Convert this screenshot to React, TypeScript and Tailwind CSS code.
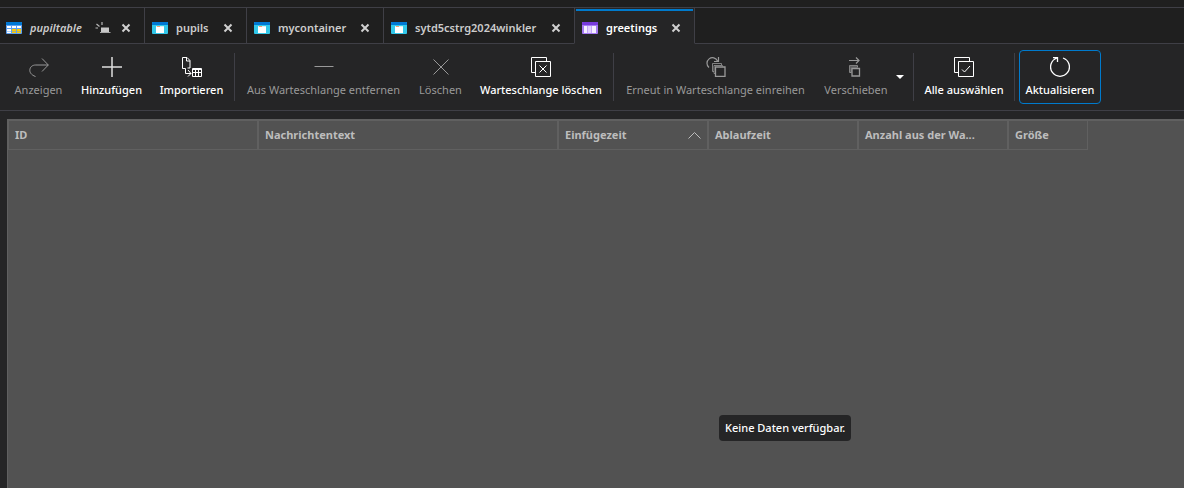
import type { ReactNode } from 'react';
import clsx from 'clsx';

function TableIcon() {
  return (
    <svg width="16" height="14" viewBox="0 0 16 14" aria-hidden="true">
      <rect x="0" y="1" width="16" height="12" rx="1" fill="#5ea0ef" />
      <path d="M0 2a1 1 0 0 1 1-1h14a1 1 0 0 1 1 1v2H0z" fill="#0078d4" />
      <g fill="#ffffff">
        <rect x="1" y="5" width="4" height="2" />
        <rect x="6" y="5" width="4" height="2" />
        <rect x="11" y="5" width="4" height="2" />
        <rect x="1" y="8" width="4" height="2" />
        <rect x="6" y="8" width="4" height="2" fill="#ffca00" />
        <rect x="11" y="8" width="4" height="2" fill="#ffca00" />
        <rect x="1" y="10.500" width="4" height="1.500" />
        <rect x="6" y="10.500" width="4" height="1.500" fill="#ffca00" />
        <rect x="11" y="10.500" width="4" height="1.500" fill="#ffca00" />
      </g>
    </svg>
  );
}

function ContainerIcon() {
  return (
    <svg width="16" height="14" viewBox="0 0 16 14" aria-hidden="true">
      <rect x="0" y="1" width="16" height="12" rx="1" fill="#32c8ea" />
      <path d="M0 2a1 1 0 0 1 1-1h14a1 1 0 0 1 1 1v2H0z" fill="#0078d4" />
      <rect x="4" y="5" width="8" height="7" fill="#ffffff" />
      <rect x="4" y="5" width="8" height="1" fill="#d8eef5" />
      <rect x="5" y="5" width="3" height="1" fill="#f2a070" />
    </svg>
  );
}

function QueueIcon() {
  return (
    <svg width="16" height="14" viewBox="0 0 16 14" aria-hidden="true">
      <rect x="0" y="1" width="16" height="12" rx="1" fill="#a67af4" />
      <path d="M0 2a1 1 0 0 1 1-1h14a1 1 0 0 1 1 1v2H0z" fill="#773adc" />
      <rect x="2" y="5" width="3" height="7" fill="#f5eeff" />
      <rect x="5.500" y="5" width="4" height="7" fill="#e2d0ff" />
      <rect x="10" y="5" width="4" height="7" fill="#f5eeff" />
    </svg>
  );
}

function PreviewIcon() {
  return (
    <svg width="16" height="12" viewBox="0 0 16 12" fill="none" aria-hidden="true">
      <path d="M1.500 2l3 2.500M7 0v3M.5 6h2.500" stroke="#b8b8b8" strokeWidth="1.200" />
      <path d="M6 5.500h8v4.500H6z" fill="#c8c8c8" />
      <path d="M5 10.500h10.500" stroke="#a8a8a8" />
    </svg>
  );
}

function CloseIcon() {
  return (
    <svg width="10" height="10" viewBox="0 0 10 10" fill="none" aria-hidden="true">
      <path d="M1.500 1.500l7 7M8.500 1.500l-7 7" stroke="#d0d0d0" strokeWidth="2" />
    </svg>
  );
}

function Glyph({ children }: { children: ReactNode }) {
  return (
    <svg width="20" height="20" viewBox="0 0 20 20" fill="none" stroke="currentColor" aria-hidden="true">
      {children}
    </svg>
  );
}

const glyphs = {
  open: (
    <Glyph>
      <path d="M6.500 19.500C2 18 .8 15 .8 13.500c0-3.500 2.500-5.500 6-5.500h12.500M13 1.500L19.300 8 13 14.500" />
    </Glyph>
  ),
  add: (
    <Glyph>
      <path d="M10 0v20M0 10h20" strokeWidth="1.500" opacity="0.85" />
    </Glyph>
  ),
  load: (
    <Glyph>
      <path d="M3.500 11.500H.5V.5h4.500l3 3v7.500H5.500M4.500.5v3.500H8" />
      <path d="M3.500 11.500v5H9M6 13l3 3.500-3 3" />
      <path d="M10.500 11.500h9v8h-9zM10 12.500h10M10 15.500h10M13.500 12v8M16.500 12v8" />
    </Glyph>
  ),
  dequeue: (
    <Glyph>
      <path d="M.5 9.500h19" />
    </Glyph>
  ),
  remove: (
    <Glyph>
      <path d="M2.500 2.500l15 15M17.500 2.500l-15 15" />
    </Glyph>
  ),
  clear: (
    <Glyph>
      <path d="M4 15.500H.5V.5h15V4M4.500 4.500h15v15h-15zM8.500 8.500l7 7M15.500 8.500l-7 7" />
    </Glyph>
  ),
  requeue: (
    <Glyph>
      <path d="M3 10.500A5.500 5.500 0 1 1 11.500 4M12.500 0v4.500H8" strokeWidth="1.200" />
      <path d="M8 14.500H6.500V6.500h9V8M9 16.500H8V8.500h8.500v1" opacity="0.8" />
      <path d="M9.500 10h9.500v9.500H9.500z" strokeWidth="1.300" />
    </Glyph>
  ),
  move: (
    <Glyph>
      <path d="M3 3.500h10M10 .5l3 3-3 3" strokeWidth="1.200" />
      <path d="M5 15.500H3.500V8.500h8V10" opacity="0.8" />
      <path d="M4 9h8v2H6v5H4z" fill="currentColor" stroke="none" opacity="0.5" />
      <path d="M6 11.500h7.500V19H6z" strokeWidth="1.300" />
    </Glyph>
  ),
  selectAll: (
    <Glyph>
      <path d="M4 15.500H.5V.5h15V4M4.500 4.500h15v15h-15zM8 12.500l2.500 2.500 5.500-6" />
    </Glyph>
  ),
  refresh: (
    <Glyph>
      <path d="M13 1A9.400 9.400 0 1 1 7 1M3 .6h4.500v4.400" strokeWidth="1.300" />
    </Glyph>
  ),
};

type TabData = { name: string; icon: ReactNode; width: string; active?: boolean; preview?: boolean };

const tabs: TabData[] = [
  { name: 'pupiltable', icon: <TableIcon />, width: 'w-36 pl-1.5', preview: true },
  { name: 'pupils', icon: <ContainerIcon />, width: 'w-[102px] border-l pl-[7px]' },
  { name: 'mycontainer', icon: <ContainerIcon />, width: 'w-[137px] border-l pl-[7px]' },
  { name: 'sytd5cstrg2024winkler', icon: <ContainerIcon />, width: 'w-[191px] border-l pl-[7px]' },
  { name: 'greetings', icon: <QueueIcon />, width: 'w-[121px] border-x pl-[7px]', active: true },
];

function Tab({ tab }: { tab: TabData }) {
  return (
    <div
      className={clsx(
        'relative flex h-9 shrink-0 items-center border-x-[#3f3f46] border-b pt-1 pr-[13px]',
        tab.width,
        tab.active ? 'border-b-[#252526] bg-[#252526] text-white' : 'border-b-[#3f3f46] text-[#cccccc]',
      )}
    >
      {tab.active && <span className="absolute inset-x-px top-px h-0.5 bg-[#007acc]" />}
      <button
        type="button"
        role="tab"
        aria-selected={Boolean(tab.active)}
        className={clsx(
          'flex min-w-0 items-center gap-2 text-[11px] leading-4 font-semibold whitespace-nowrap',
          tab.preview && 'italic',
        )}
      >
        {tab.icon}
        {tab.name}
      </button>
      <span className="ml-auto flex items-center gap-2.5">
        {tab.preview && <PreviewIcon />}
        <button type="button" aria-label={`${tab.name} schließen`}>
          <CloseIcon />
        </button>
      </span>
    </div>
  );
}

function Action({
  icon,
  label,
  width,
  disabled,
  current,
}: {
  icon: ReactNode;
  label: string;
  width: string;
  disabled?: boolean;
  current?: boolean;
}) {
  return (
    <button
      type="button"
      disabled={disabled}
      className={clsx(
        'flex h-[54px] shrink-0 flex-col items-center gap-[5px] rounded border pt-1.5 text-[11px] leading-4 whitespace-nowrap',
        width,
        disabled ? 'text-[#999999]' : 'font-medium text-white',
        current ? 'border-[#007acc]' : 'border-transparent',
      )}
    >
      {icon}
      <span>{label}</span>
    </button>
  );
}

function Separator() {
  return <span className="h-12 w-px shrink-0 bg-[#3f3f46]" />;
}

const columns = [
  { label: 'ID', width: 'w-[250px]' },
  { label: 'Nachrichtentext', width: 'w-[300px]' },
  { label: 'Einfügezeit', width: 'w-[150px]', sorted: true },
  { label: 'Ablaufzeit', width: 'w-[150px]' },
  { label: 'Anzahl aus der Wa...', width: 'w-[150px]' },
  { label: 'Größe', width: 'w-20' },
];

export default function App() {
  return (
    <div className="flex h-screen flex-col overflow-hidden bg-[#252526] font-['Noto_Sans','Open_Sans',sans-serif]">
      <div className="bg-[#1f1f1f] pt-[7px]">
        <div role="tablist" className="flex border-t border-[#3f3f46]">
          {tabs.map((tab) => (
            <Tab key={tab.name} tab={tab} />
          ))}
          <div className="flex-1 border-b border-[#3f3f46]" />
        </div>
      </div>

      <div role="toolbar" className="flex items-center gap-1 border-b border-[#3f3f46] pt-1.5 pb-1.5 pl-[7px]">
        <Action icon={glyphs.open} label="Anzeigen" width="w-[63px]" disabled />
        <Action icon={glyphs.add} label="Hinzufügen" width="w-[75px]" />
        <Action icon={glyphs.load} label="Importieren" width="w-[77px]" />
        <Separator />
        <Action icon={glyphs.dequeue} label="Aus Warteschlange entfernen" width="w-[169px]" disabled />
        <Action icon={glyphs.remove} label="Löschen" width="w-[57px]" disabled />
        <Action icon={glyphs.clear} label="Warteschlange löschen" width="w-[136px]" />
        <Separator />
        <Action icon={glyphs.requeue} label="Erneut in Warteschlange einreihen" width="w-[195px]" disabled />
        <div className="flex">
          <Action icon={glyphs.move} label="Verschieben" width="w-[78px]" disabled />
          <button
            type="button"
            aria-label="Weitere Optionen"
            className="flex w-3.5 items-center justify-center pr-1 text-white"
          >
            <svg width="8" height="4" viewBox="0 0 8 4" fill="currentColor" aria-hidden="true">
              <path d="M0 0h8L4 4z" />
            </svg>
          </button>
        </div>
        <Separator />
        <Action icon={glyphs.selectAll} label="Alle auswählen" width="w-[92px]" />
        <Separator />
        <Action icon={glyphs.refresh} label="Aktualisieren" width="w-[82px]" current />
      </div>

      <main className="relative mt-2 ml-[7px] flex-1 border-t-2 border-l border-[#606060] bg-[#525252]">
        <table className="w-[1080px] table-fixed border-separate border-spacing-0">
          <thead>
            <tr>
              {columns.map((column) => (
                <th
                  key={column.label}
                  scope="col"
                  aria-sort={column.sorted ? 'ascending' : undefined}
                  className={clsx(
                    'h-[29px] border-r border-b border-l border-[#606060] p-0 px-1.5 text-left text-[11px] leading-4 font-bold text-[#bdbdbd]',
                    column.width,
                  )}
                >
                  <span className="flex items-center justify-between whitespace-nowrap">
                    {column.label}
                    {column.sorted && (
                      <svg width="13" height="7" viewBox="0 0 13 7" fill="none" stroke="currentColor" aria-hidden="true">
                        <path d="M.5 6.500l6-6 6 6" />
                      </svg>
                    )}
                  </span>
                </th>
              ))}
            </tr>
          </thead>
        </table>
        <p
          role="status"
          className="absolute top-[294px] left-[711px] rounded bg-[#252526] px-1.5 py-[5px] text-[11px] leading-4 font-medium whitespace-nowrap text-white"
        >
          Keine Daten verfügbar.
        </p>
      </main>
    </div>
  );
}
